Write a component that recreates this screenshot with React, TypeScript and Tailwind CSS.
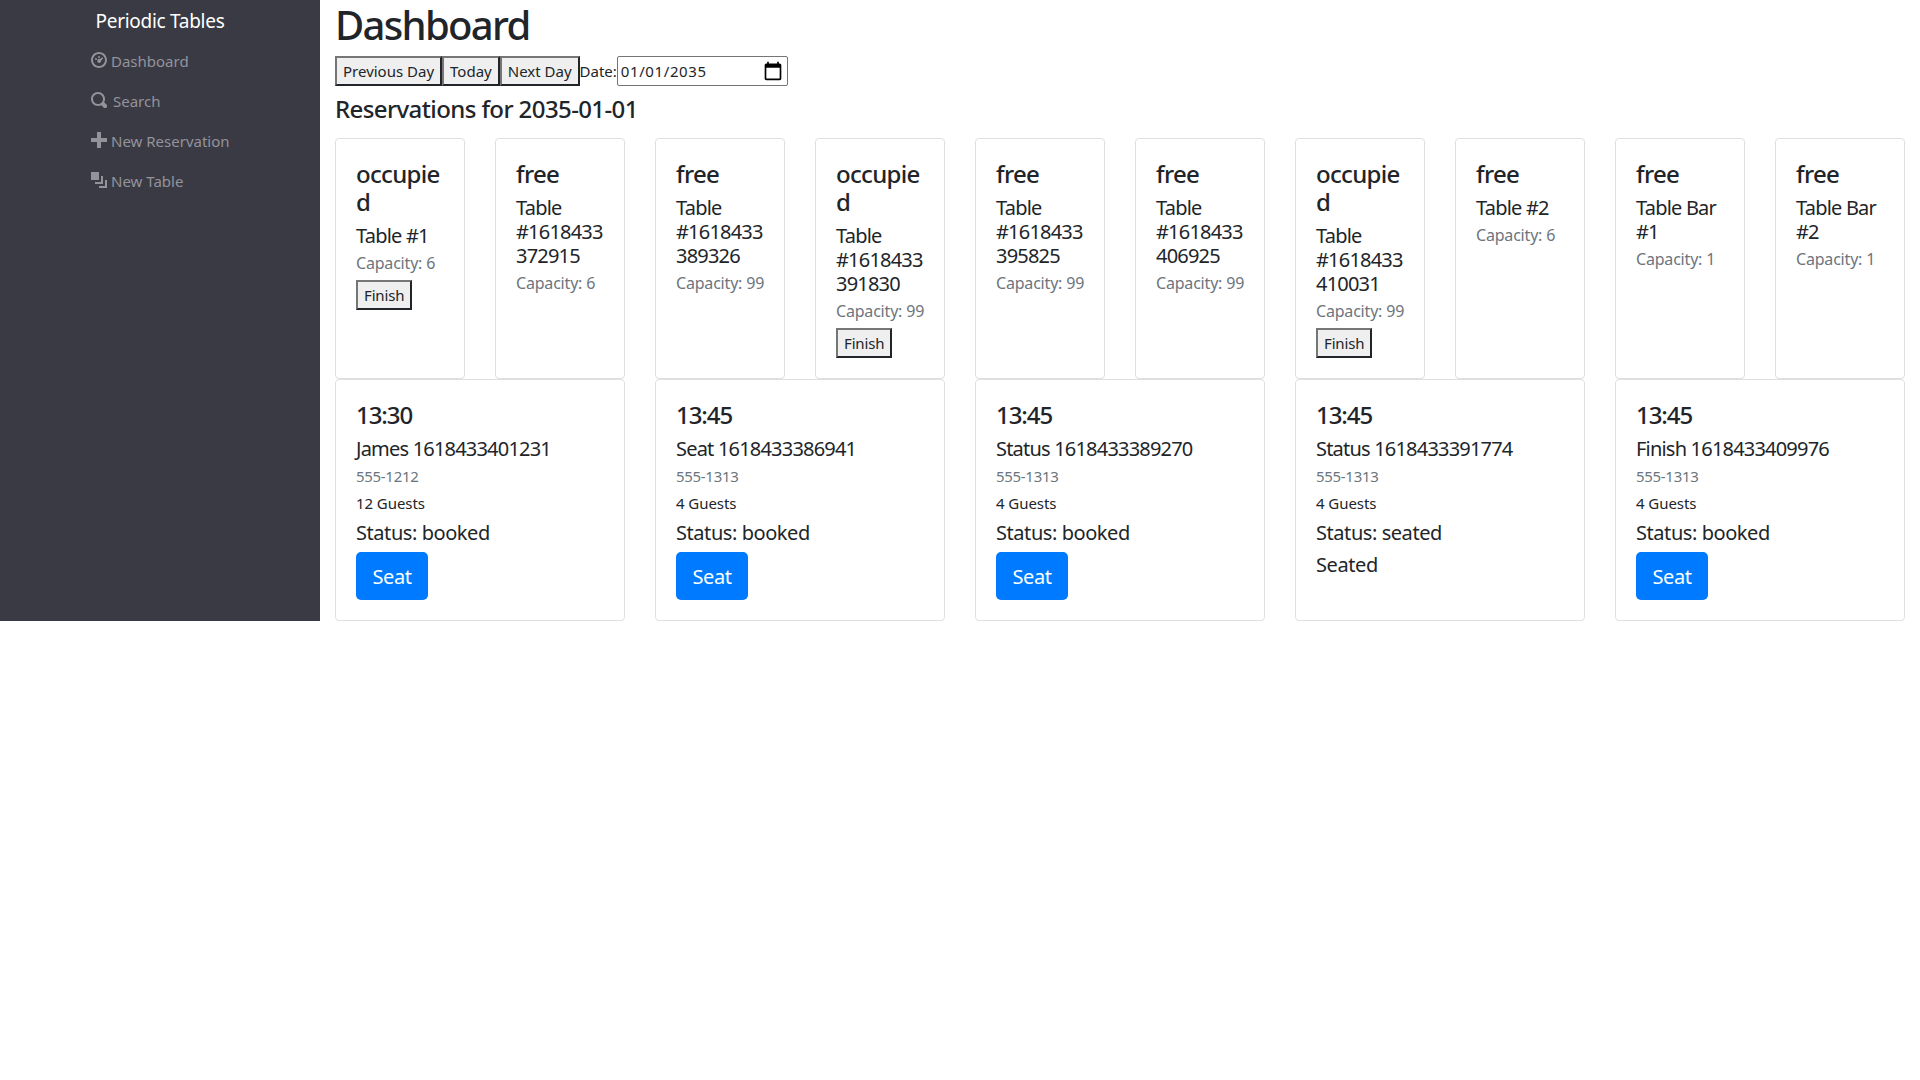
import { FC } from 'react'

const tables = [
  { status: 'occupied', name: 'Table #1', capacity: 6 },
  { status: 'free', name: 'Table #1618433372915', capacity: 6 },
  { status: 'free', name: 'Table #1618433389326', capacity: 99 },
  { status: 'occupied', name: 'Table #1618433391830', capacity: 99 },
  { status: 'free', name: 'Table #1618433395825', capacity: 99 },
  { status: 'free', name: 'Table #1618433406925', capacity: 99 },
  { status: 'occupied', name: 'Table #1618433410031', capacity: 99 },
  { status: 'free', name: 'Table #2', capacity: 6 },
  { status: 'free', name: 'Table Bar #1', capacity: 1 },
  { status: 'free', name: 'Table Bar #2', capacity: 1 },
]

const reservations = [
  { time: '13:30', name: 'James 1618433401231', phone: '555-1212', guests: 12, status: 'booked' },
  { time: '13:45', name: 'Seat 1618433386941', phone: '555-1313', guests: 4, status: 'booked' },
  { time: '13:45', name: 'Status 1618433389270', phone: '555-1313', guests: 4, status: 'booked' },
  { time: '13:45', name: 'Status 1618433391774', phone: '555-1313', guests: 4, status: 'seated' },
  { time: '13:45', name: 'Finish 1618433409976', phone: '555-1313', guests: 4, status: 'booked' },
]

const navIcons = {
  dashboard:
    'M4 0C1.8 0 0 1.8 0 4s1.8 4 4 4 4-1.8 4-4-1.8-4-4-4zm0 1c1.66 0 3 1.34 3 3s-1.34 3-3 3-3-1.34-3-3 1.34-3 3-3zM2.5 3a.5.5 0 1 0 0 1 .5.5 0 0 0 0-1zM4 2a.5.5 0 1 0 0 1 .5.5 0 0 0 0-1zm1.7.6L4.4 3.5a1 1 0 1 0 .7.9l1-1.3-.4-.5z',
  search:
    'M3.5 0C1.57 0 0 1.57 0 3.5S1.57 7 3.5 7c.59 0 1.17-.14 1.66-.41a1 1 0 0 0 .13.13l1 1a1.02 1.02 0 1 0 1.44-1.44l-1-1a1 1 0 0 0-.16-.13c.27-.49.44-1.06.44-1.66C7 1.57 5.43 0 3.5 0zm0 1C4.89 1 6 2.11 6 3.5c0 .66-.24 1.27-.66 1.72l-.03.03a1 1 0 0 0-.13.13c-.44.4-1.04.63-1.69.63C2.11 6 1 4.89 1 3.5S2.11 1 3.5 1z',
  plus: 'M3 0v3H0v2h3v3h2V5h3V3H5V0H3z',
  layers: 'M0 0v4h4V0H0zm5 2v3H2v1h4V2H5zm2 2v3H4v1h4V4H7z',
}

const navItems = [
  { label: 'Dashboard', icon: navIcons.dashboard, gap: 'ml-[4px]' },
  { label: 'Search', icon: navIcons.search, gap: 'ml-[6px]' },
  { label: 'New Reservation', icon: navIcons.plus, gap: 'ml-[4px]' },
  { label: 'New Table', icon: navIcons.layers, gap: 'ml-[4px]' },
]

const NavIcon: FC<{ d: string }> = ({ d }) => (
  <svg viewBox="0 0 8 8" className="w-4 h-4 fill-current shrink-0 ml-[1px] -mt-[2px]">
    <path d={d} />
  </svg>
)

const PlainButton: FC<{ label: string }> = ({ label }) => (
  <button className="h-[30px] px-[6px] bg-[#efefef] text-[#212529] text-[15px] tracking-normal border-2 border-t-[#767676] border-l-[#767676] border-r-[#212529] border-b-[#212529]">
    {label}
  </button>
)

export default function App() {
  return (
    <div className="min-h-screen bg-white text-[#212529] font-['Noto_Sans',sans-serif]">
      <div className="flex items-start">
        {/* Sidebar */}
        <aside className="w-[320px] h-[621px] shrink-0 bg-[#3a3a44] pt-[8px]">
          <div className="text-center text-white text-[19px] leading-[26px] tracking-[-0.015em] mb-[6px]">Periodic Tables</div>
          <ul className="flex flex-col pl-[90px] text-[#93939b] text-[15px]">
            {navItems.map((item) => (
              <li key={item.label} className="h-[40px] flex items-center pt-[2px]">
                <NavIcon d={item.icon} />
                <span className={item.gap}>{item.label}</span>
              </li>
            ))}
          </ul>
        </aside>

        {/* Main */}
        <main className="flex-1 px-[15px]">
          <h1 className="text-[40px] leading-[48px] font-medium pt-[1px] mb-[7px] tracking-[-0.042em]">Dashboard</h1>
          <div className="flex items-center h-[30px] text-[15px]">
            <PlainButton label="Previous Day" />
            <PlainButton label="Today" />
            <PlainButton label="Next Day" />
            <span className="tracking-normal">Date:</span>
            <div className="w-[171px] h-[30px] flex items-center justify-between border border-[#767676] rounded-[2px] pl-[3px] pr-[4px] tracking-[0.04em]">
              <span>01/01/2035</span>
              <svg viewBox="0 0 24 24" className="w-[20px] h-[20px] fill-black">
                <path d="M20 3h-1V1h-2v2H7V1H5v2H4c-1.1 0-2 .9-2 2v16c0 1.1.9 2 2 2h16c1.1 0 2-.9 2-2V5c0-1.1-.9-2-2-2zm0 18H4V8h16v13z" />
              </svg>
            </div>
          </div>
          <h4 className="text-[24px] leading-[29px] font-medium mt-[8px] mb-[15px] tracking-[-0.025em]">Reservations for 2035-01-01</h4>

          {/* Tables */}
          <div className="grid grid-cols-10 gap-x-[30px]">
            {tables.map((t, i) => (
              <div key={i} className="h-[241px] border border-[#dfdfdf] rounded-[4px] px-[20px] pt-[21px] [overflow-wrap:anywhere]">
                <h4 className="text-[24px] leading-[28px] font-medium mb-2 tracking-[-0.028em]">{t.status}</h4>
                <h5 className="text-[20px] leading-[24px] mb-[6px] tracking-[-0.04em]">{t.name}</h5>
                <div className="text-[16px] leading-[19px] text-[#6c757d] mb-[7px] tracking-[-0.012em] whitespace-nowrap">Capacity: {t.capacity}</div>
                {t.status === 'occupied' && (
                  <button className="h-[30px] px-[6px] bg-[#efefef] text-[15px] tracking-[-0.01em] border-2 border-t-[#767676] border-l-[#767676] border-r-[#212529] border-b-[#212529]">
                    Finish
                  </button>
                )}
              </div>
            ))}
          </div>

          {/* Reservations */}
          <div className="grid grid-cols-5 gap-x-[30px]">
            {reservations.map((r, i) => (
              <div key={i} className="h-[242px] border border-[#dfdfdf] rounded-[4px] p-[20px]">
                <h4 className="text-[24px] leading-[29px] font-medium mb-2 tracking-[-0.045em]">{r.time}</h4>
                <h5 className="text-[20px] leading-[24px] mb-[6px] tracking-[-0.04em]">{r.name}</h5>
                <div className="text-[15px] leading-[19px] text-[#6c757d] mb-2 tracking-[-0.02em]">{r.phone}</div>
                <div className="text-[15px] leading-[19px] mb-2 tracking-[-0.005em]">{r.guests} Guests</div>
                <div className="text-[20px] leading-[24px] mb-2 tracking-[-0.022em]">Status: {r.status}</div>
                {r.status === 'booked' ? (
                  <button className="h-[48px] w-[72px] -mt-[1px] pt-[2px] bg-[#007bff] text-white text-[20px] rounded-[5px] tracking-[-0.02em]">Seat</button>
                ) : (
                  <div className="text-[20px] leading-[24px] tracking-[-0.02em]">Seated</div>
                )}
              </div>
            ))}
          </div>
        </main>
      </div>
    </div>
  )
}
